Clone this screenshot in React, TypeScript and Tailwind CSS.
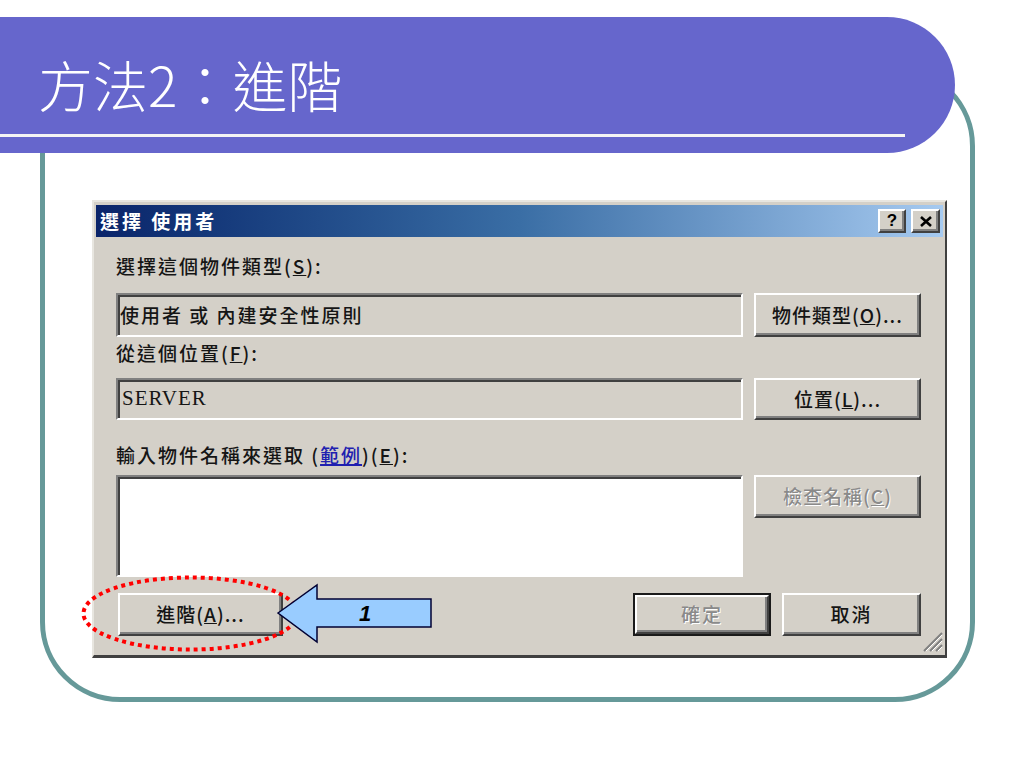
import React from "react";

const raised =
  "flex items-center justify-center bg-[#d4d0c8] border-2 border-t-[#ffffff] border-l-[#ffffff] border-r-[#404040] border-b-[#404040] shadow-[inset_-2px_-2px_0_#808080]";
const inset =
  "border-2 border-t-[#808080] border-l-[#808080] border-r-[#ffffff] border-b-[#ffffff] shadow-[inset_2px_2px_0_#404040]";
const cjk = "font-['Noto_Sans_CJK_TC','Noto_Sans_CJK_SC',sans-serif] font-medium";
const disabledText = "text-[#8a8a8a] [text-shadow:1px_1px_0_#ffffff]";

function Label({ children, className = "" }: { children: React.ReactNode; className?: string }) {
  return (
    <div className={`h-[24px] leading-[24px] text-[19px] tracking-[2px] text-[#151515] ${cjk} ${className}`}>
      {children}
    </div>
  );
}

export default function App() {
  return (
    <div className="relative w-[1024px] h-[768px] overflow-hidden bg-white pt-[17px]">
      {/* Banner */}
      <div className="relative z-10 w-[955px] h-[136px] bg-[#6666cc] rounded-r-[68px]">
        <div
          className="pl-[38px] pt-[38px] h-[94px] leading-[56px] text-[55px] text-white font-['Noto_Sans_CJK_TC','Noto_Sans_CJK_SC',sans-serif] font-light"
        >
          方法2：進階
        </div>
        <div className="mt-[23px] w-[905px] h-[3px] bg-[#f4f4f4]" />
      </div>

      {/* Teal frame */}
      <div className="ml-[40px] mt-[-87px] w-[935px] h-[636px] border-[5px] border-[#669999] rounded-[80px] pl-[47px] pt-[129px]">
        {/* Dialog */}
        <div className="relative w-[855px] h-[458px] bg-[#d4d0c8] border-2 border-t-[#e8e6e0] border-l-[#e8e6e0] border-r-[#404040] border-b-[#404040] border-b-[3px] pt-[3px] px-[2px]">
          {/* Title bar */}
          <div className="h-[32px] flex items-center justify-between pl-[4px] pr-[3px] bg-gradient-to-r from-[#0a246a] via-[#3a6ea5] to-[#a6caf0]">
            <span className="text-[19px] font-bold tracking-[3px] text-white font-['Noto_Sans_CJK_TC','Noto_Sans_CJK_SC',sans-serif]">
              選擇 使用者
            </span>
            <div className="flex gap-[5px]">
              <div className={`${raised} w-[28px] h-[24px] text-[17px] font-bold text-black font-['Liberation_Sans',sans-serif]`}>
                ?
              </div>
              <div className={`${raised} w-[29px] h-[24px]`}>
                <svg width="12" height="11" viewBox="0 0 12 11">
                  <path d="M1 1 L11 10 M11 1 L1 10" stroke="#000" strokeWidth="2.6" />
                </svg>
              </div>
            </div>
          </div>

          {/* Content */}
          <div className="pl-[20px] flex flex-col">
            <Label className="mt-[17px]">
              選擇這個物件類型(<u>S</u>):
            </Label>
            <div className="mt-[15px] flex gap-[11px] h-[44px]">
              <div className={`${inset} w-[627px] h-[44px] bg-[#d4d0c8] pl-[2px] flex items-center`}>
                <span className={`text-[19px] tracking-[2px] text-[#151515] ${cjk}`}>使用者 或 內建安全性原則</span>
              </div>
              <div className={`${raised} w-[167px] h-[44px] text-[19px] tracking-[1px] text-[#151515] ${cjk}`}>
                物件類型(<u>O</u>)...
              </div>
            </div>
            <Label className="mt-[4px]">
              從這個位置(<u>F</u>):
            </Label>
            <div className="mt-[13px] flex gap-[11px] h-[42px]">
              <div className={`${inset} w-[627px] h-[42px] bg-[#d4d0c8] pl-[4px] flex items-center`}>
                <span className="text-[21px] tracking-[1px] text-[#151515] font-['Liberation_Serif',serif]">SERVER</span>
              </div>
              <div className={`${raised} w-[167px] h-[42px] text-[19px] tracking-[1px] text-[#151515] ${cjk}`}>
                位置(<u>L</u>)...
              </div>
            </div>
            <Label className="mt-[23px]">
              輸入物件名稱來選取 (<span className="text-[#1f1fb0] underline decoration-2">範例</span>)(<u>E</u>):
            </Label>
            <div className="mt-[8px] flex gap-[11px] h-[102px] items-start">
              <div className={`${inset} w-[627px] h-[102px] bg-white`} />
              <div className={`${raised} w-[167px] h-[43px] text-[19px] tracking-[1px] ${disabledText} ${cjk}`}>
                檢查名稱(<u>C</u>)
              </div>
            </div>
            <div className="mt-[16px] flex h-[43px] w-[805px]">
              <div className={`${raised} ml-[2px] w-[165px] h-[43px] text-[19px] tracking-[1px] text-[#151515] ${cjk}`}>
                進階(<u>A</u>)...
              </div>
              <div className="flex-1" />
              <div className="w-[138px] h-[43px] border-2 border-[#1a1a1a]">
                <div className={`${raised} w-full h-full text-[19px] tracking-[2px] ${disabledText} ${cjk}`}>確定</div>
              </div>
              <div
                className={`${raised} ml-[11px] w-[139px] h-[43px] text-[19px] tracking-[2px] text-[#151515] ${cjk}`}
              >
                取消
              </div>
            </div>
          </div>

          {/* Resize grip */}
          <svg className="absolute right-[2px] bottom-[3px]" width="22" height="22" viewBox="0 0 22 22">
            <path d="M21 3 L3 21 M21 9 L9 21 M21 15 L15 21" stroke="#808080" strokeWidth="2" />
            <path d="M21 5 L5 21 M21 11 L11 21 M21 17 L17 21" stroke="#ffffff" strokeWidth="1" />
          </svg>
        </div>
      </div>

      {/* Annotations */}
      <svg className="absolute left-0 top-0 pointer-events-none" width="1024" height="768" viewBox="0 0 1024 768">
        <ellipse
          cx="190.5"
          cy="613.5"
          rx="107"
          ry="36"
          fill="none"
          stroke="#ff0000"
          strokeWidth="4"
          strokeDasharray="4 4"
        />
        <polygon
          points="278,613 317,585 317,599 431,599 431,627 317,627 317,642"
          fill="#99ccff"
          stroke="#000033"
          strokeWidth="1.5"
        />
        <text
          x="365"
          y="621"
          textAnchor="middle"
          fontFamily="Liberation Sans, Arial, sans-serif"
          fontSize="22"
          fontWeight="bold"
          fontStyle="italic"
          fill="#000"
        >
          1
        </text>
      </svg>
    </div>
  );
}
